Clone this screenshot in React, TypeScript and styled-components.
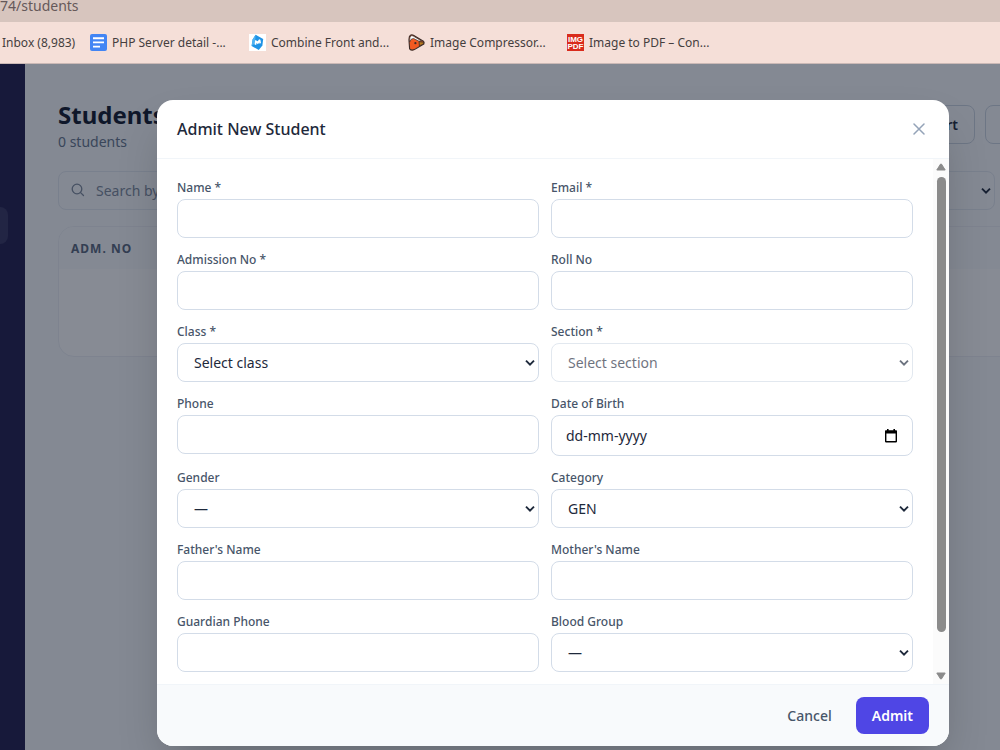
import React, { useId } from "react";
import styled, { createGlobalStyle } from "styled-components";

const GlobalStyle = createGlobalStyle`
  *, *::before, *::after { box-sizing: border-box; }
  body {
    margin: 0;
    overflow: hidden;
    font-family: "Noto Sans", "Open Sans", sans-serif;
    font-size: 14px;
    color: #1e293b;
  }
  button, input, select { font: inherit; color: inherit; margin: 0; }
  svg { display: block; flex: none; }
`;

const Page = styled.div`
  display: flex;
  flex-direction: column;
  height: 100vh;
  overflow: hidden;
`;

/* Browser chrome */

const AddressBar = styled.div`
  flex: none;
  height: 22px;
  overflow: hidden;
  background: #d7c5be;
  color: #66595a;
  font-size: 14px;
  line-height: 12px;
`;

const BookmarksBar = styled.nav`
  flex: none;
  display: flex;
  align-items: center;
  height: 42px;
  padding-left: 2px;
  background: #f5dfd8;
  border-bottom: 1px solid #cbb9b6;
`;

const Bookmark = styled.a<{ $first?: boolean }>`
  flex: none;
  display: flex;
  align-items: center;
  gap: 5px;
  width: ${(p) => (p.$first ? 88 : 159)}px;
  color: #453e3e;
  font-size: 12px;
  text-decoration: none;
  white-space: nowrap;
`;

/* Page behind the dialog */

const Workspace = styled.div`
  position: relative;
  flex: 1;
  display: flex;
  min-height: 0;
  background: #f8fafc;
  overflow: hidden;
`;

const Sidebar = styled.aside`
  flex: none;
  width: 25px;
  padding-top: 143px;
  background: #1e1b4b;
`;

const SidebarItem = styled.div`
  width: 8px;
  height: 37px;
  border-radius: 0 8px 8px 0;
  background: #35325e;
`;

const Main = styled.main`
  flex: none;
  width: calc(100% + 65px);
  padding: 36px 0 0 33px;
`;

const PageHead = styled.header`
  display: flex;
  justify-content: space-between;
  align-items: flex-start;
  height: 51px;
`;

const PageTitle = styled.h1`
  margin: 0;
  color: #0f172a;
  font-size: 24px;
  line-height: 30px;
  font-weight: 700;
`;

const PageCount = styled.p`
  margin: 0;
  color: #64748b;
  font-size: 14px;
  line-height: 24px;
`;

const Actions = styled.div`
  display: flex;
  gap: 10px;
  padding-top: 5px;
`;

const OutlineButton = styled.button<{ $width: number }>`
  width: ${(p) => p.$width}px;
  height: 39px;
  padding: 0 16px;
  text-align: right;
  font-weight: 600;
  background: #f8fafc;
  border: 1px solid #cbd5e1;
  border-radius: 8px;
`;

const Filters = styled.div`
  display: flex;
  gap: 10px;
  margin-top: 20px;
  height: 39px;
`;

const SearchBox = styled.label`
  flex: 1;
  display: flex;
  align-items: center;
  gap: 10px;
  padding-left: 12px;
  color: #7c899b;
  border: 1px solid #e2e8f0;
  border-radius: 8px;

  input {
    flex: 1;
    min-width: 0;
    border: 0;
    padding: 0;
    background: transparent;
    outline: none;
  }
  input::placeholder { color: #7c899b; opacity: 1; }
`;

const TableCard = styled.section`
  margin-top: 16px;
  height: 131px;
  overflow: hidden;
  background: #ffffff;
  border: 1px solid #eceff5;
  border-radius: 16px;

  table { width: 100%; border-collapse: collapse; }
  th {
    height: 42px;
    padding: 0 12px;
    text-align: left;
    font-size: 12px;
    font-weight: 700;
    letter-spacing: 1px;
    color: #56657b;
    background: #f8fafc;
  }
`;

/* Dialog */

const Overlay = styled.div`
  position: absolute;
  inset: 0;
  display: flex;
  align-items: flex-start;
  padding: 36px 51px 0 157px;
  background: rgba(15, 23, 42, 0.5);
`;

const Dialog = styled.section`
  flex: 1;
  min-width: 0;
  overflow: hidden;
  background: #ffffff;
  border-radius: 16px;
  box-shadow: 0 24px 48px -12px rgba(0, 0, 0, 0.25);
`;

const DialogHead = styled.header`
  display: flex;
  align-items: center;
  justify-content: space-between;
  height: 59px;
  padding: 0 22px 0 20px;
  border-bottom: 1px solid #f1f5f9;

  h2 { margin: 0; font-size: 16px; line-height: 24px; font-weight: 500; }
`;

const CloseButton = styled.button`
  display: grid;
  place-items: center;
  width: 16px;
  height: 16px;
  padding: 0;
  color: #94a3b8;
  background: none;
  border: 0;
`;

const DialogBody = styled.div`
  display: flex;
`;

const Form = styled.form`
  flex: 1;
  min-width: 0;
  display: grid;
  grid-template-columns: 1fr 1fr;
  gap: 13px 12px;
  padding: 20px 20px 12px;
`;

const FieldBox = styled.div`
  display: flex;
  flex-direction: column;
  gap: 3px;
  min-width: 0;

  label {
    color: #475569;
    font-size: 12px;
    line-height: 17px;
    font-weight: 500;
  }
`;

const Input = styled.input`
  width: 100%;
  height: 39px;
  padding: 0 14px;
  background: #ffffff;
  border: 1px solid #d3dce8;
  border-radius: 8px;
`;

const SelectWrap = styled.div<{ $muted?: boolean }>`
  display: grid;
  align-items: center;
  opacity: ${(p) => (p.$muted ? 0.65 : 1)};

  > * { grid-area: 1 / 1; }
  svg { justify-self: end; margin-right: 4px; pointer-events: none; }
`;

const Select = styled.select`
  appearance: none;
  width: 100%;
  height: 39px;
  padding: 0 30px 0 16px;
  background: #ffffff;
  border: 1px solid #d3dce8;
  border-radius: 8px;
  opacity: 1;
`;

const DateWrap = styled.div`
  display: flex;
  align-items: center;
  height: 41px;
  padding: 0 14px;
  border: 1px solid #d3dce8;
  border-radius: 8px;

  input {
    flex: 1;
    min-width: 0;
    padding: 0;
    border: 0;
    background: none;
    outline: none;
  }
  input::placeholder { color: #1e293b; opacity: 1; }
  button { padding: 0; border: 0; background: none; color: #000000; }
`;

const ScrollTrack = styled.div`
  flex: none;
  display: flex;
  flex-direction: column;
  align-items: center;
  gap: 6px;
  width: 16px;
  padding: 4px 0;
  background: #fbfbfb;
`;

const ScrollLane = styled.div`
  flex: 1;
  width: 9px;
`;

const ScrollThumb = styled.div`
  height: 93%;
  border-radius: 5px;
  background: #8b8b8b;
`;

const DialogFoot = styled.footer`
  display: flex;
  justify-content: flex-end;
  gap: 8px;
  padding: 12px 20px;
  background: #f8fafc;
  border-top: 1px solid #f1f5f9;
`;

const FootButton = styled.button<{ $primary?: boolean }>`
  height: 37px;
  padding: 0 16px;
  border: 0;
  border-radius: 8px;
  font-weight: ${(p) => (p.$primary ? 600 : 500)};
  color: ${(p) => (p.$primary ? "#ffffff" : "#475569")};
  background: ${(p) => (p.$primary ? "#4f46e5" : "transparent")};
`;

/* Icons */

const Chevron = () => (
  <svg width="10" height="8" viewBox="0 0 10 8" fill="none" stroke="#1e293b" strokeWidth="1.9">
    <path d="M1 1.6l4 4 4-4" />
  </svg>
);

const DocsIcon = () => (
  <svg width="17" height="17" viewBox="0 0 17 17">
    <rect width="17" height="17" rx="2" fill="#4285f4" />
    <path d="M3 4.2h11M3 8.4h11M3 12.6h7" stroke="#fff" strokeWidth="1.9" />
  </svg>
);

const CombineIcon = () => (
  <svg width="17" height="17" viewBox="0 0 17 17">
    <rect width="17" height="17" fill="#fff" />
    <path d="M6.6 0.8L14.2 5 13.4 11.6 9.8 16 2.6 12 3.6 5.6z" fill="#1f93e6" />
    <path d="M6.6 0.8L3.6 5.6 2.6 12 6 9.4z" fill="#4fb3f2" />
    <path d="M6.2 6l-.6 4.4 1.6.6.3-2 1.4 1.2 1.4-1.8.5 1.6 1.2-1.2-.6-3-1.3-.5-1.3 2z" fill="#fff" />
  </svg>
);

const CompressorIcon = () => (
  <svg width="17" height="17" viewBox="0 0 17 17" strokeLinejoin="round">
    <path d="M1 6.4Q.8 2.2 2.4 1.2 3.8.4 5.4 1.2L15.4 7.2Q16.4 8.4 15.8 10L6.4 15.6Q3.4 17 1.6 14.8z" fill="#f15a22" stroke="#3a2c28" strokeWidth="1.1" />
    <path d="M1.6 5.6Q1.8 2.6 3 1.8 4 1.4 5.2 2L13.6 7 11 7.2 5.4 4.4 3 5.4 1.6 8z" fill="#fff" stroke="#3a2c28" strokeWidth=".7" />
    <path d="M11 7.6l4.8.6-.6 2-3.8 1.6z" fill="#b8791d" stroke="#3a2c28" strokeWidth=".8" />
    <circle cx="7.4" cy="9.2" r="1.1" fill="#3a2c28" />
  </svg>
);

const ImgPdfIcon = () => (
  <svg width="17" height="17" viewBox="0 0 17 17">
    <rect width="17" height="17" fill="#d92b1c" />
    <g fill="#fff" fontFamily="Liberation Sans, sans-serif" fontWeight="700" fontSize="8" textAnchor="middle">
      <text x="8.5" y="7.6">IMG</text>
      <text x="8.5" y="15.4">PDF</text>
    </g>
  </svg>
);

const SearchIcon = () => (
  <svg width="15" height="15" viewBox="0 0 15 15" fill="none" stroke="currentColor" strokeWidth="1.3" strokeLinecap="round">
    <circle cx="6" cy="6" r="4.8" />
    <path d="M9.6 9.6l2.9 2.9" />
  </svg>
);

const CloseIcon = () => (
  <svg width="12" height="12" viewBox="0 0 12 12" fill="none" stroke="currentColor" strokeWidth="1.5" strokeLinecap="round">
    <path d="M1 1l10 10M11 1L1 11" />
  </svg>
);

const CalendarIcon = () => (
  <svg width="14" height="14" viewBox="0 0 14 14">
    <path d="M3 0h1.6v1.2h4.8V0H11v1.2h1.2q.8 0 .8.8v10.6q0 .8-.8.8H1.8q-.8 0-.8-.8V2q0-.8.8-.8H3zM2.4 4.6v7.4h9.2V4.6z" fill="currentColor" fillRule="evenodd" />
  </svg>
);

const Arrow = ({ down }: { down?: boolean }) => (
  <svg width="10" height="8" viewBox="0 0 10 8" fill="#8b8b8b" stroke="#8b8b8b" strokeLinejoin="round">
    <path d={down ? "M.8 1h8.4L5.4 7h-.8z" : "M.8 7h8.4L5.4 1h-.8z"} />
  </svg>
);

/* Fields */

type FieldProps = { label: string; kind?: "text" | "date" | "select"; value?: string; disabled?: boolean };

function Field({ label, kind = "text", value, disabled }: FieldProps) {
  const id = useId();
  return (
    <FieldBox>
      <label htmlFor={id}>{label}</label>
      {kind === "text" && <Input id={id} type="text" />}
      {kind === "select" && (
        <SelectWrap $muted={disabled}>
          <Select id={id} disabled={disabled}>
            <option>{value}</option>
          </Select>
          <Chevron />
        </SelectWrap>
      )}
      {kind === "date" && (
        <DateWrap>
          <input id={id} type="text" placeholder="dd-mm-yyyy" />
          <button type="button" aria-label="Open calendar">
            <CalendarIcon />
          </button>
        </DateWrap>
      )}
    </FieldBox>
  );
}

const fields: FieldProps[] = [
  { label: "Name *" },
  { label: "Email *" },
  { label: "Admission No *" },
  { label: "Roll No" },
  { label: "Class *", kind: "select", value: "Select class" },
  { label: "Section *", kind: "select", value: "Select section", disabled: true },
  { label: "Phone" },
  { label: "Date of Birth", kind: "date" },
  { label: "Gender", kind: "select", value: "—" },
  { label: "Category", kind: "select", value: "GEN" },
  { label: "Father's Name" },
  { label: "Mother's Name" },
  { label: "Guardian Phone" },
  { label: "Blood Group", kind: "select", value: "—" },
];

const FilterSelect = styled(SelectWrap)<{ $width: number }>`
  width: ${(p) => p.$width}px;

  select { background: transparent; border-color: #e2e8f0; }
`;

export default function App() {
  return (
    <Page>
      <GlobalStyle />
      <AddressBar>74/students</AddressBar>
      <BookmarksBar>
        <Bookmark href="#" $first>Inbox (8,983)</Bookmark>
        <Bookmark href="#"><DocsIcon />PHP Server detail -...</Bookmark>
        <Bookmark href="#"><CombineIcon />Combine Front and...</Bookmark>
        <Bookmark href="#"><CompressorIcon />Image Compressor...</Bookmark>
        <Bookmark href="#"><ImgPdfIcon />Image to PDF – Con...</Bookmark>
      </BookmarksBar>
      <Workspace>
        <Sidebar><SidebarItem /></Sidebar>
        <Main>
          <PageHead>
            <div>
              <PageTitle>Students</PageTitle>
              <PageCount>0 students</PageCount>
            </div>
            <Actions>
              <OutlineButton $width={90}>Import</OutlineButton>
              <OutlineButton $width={105} aria-label="Add" />
            </Actions>
          </PageHead>
          <Filters>
            <SearchBox>
              <SearchIcon />
              <input type="text" placeholder="Search by name" />
            </SearchBox>
            <FilterSelect $width={120}>
              <Select aria-label="Class filter"><option /></Select>
              <Chevron />
            </FilterSelect>
            <FilterSelect $width={85}>
              <Select aria-label="Section filter"><option /></Select>
              <Chevron />
            </FilterSelect>
          </Filters>
          <TableCard>
            <table>
              <thead><tr><th>ADM. NO</th></tr></thead>
            </table>
          </TableCard>
        </Main>
        <Overlay>
          <Dialog role="dialog" aria-labelledby="dialog-title">
            <DialogHead>
              <h2 id="dialog-title">Admit New Student</h2>
              <CloseButton aria-label="Close"><CloseIcon /></CloseButton>
            </DialogHead>
            <DialogBody>
              <Form id="admit-form">
                {fields.map((f) => <Field key={f.label} {...f} />)}
              </Form>
              <ScrollTrack aria-hidden="true">
                <Arrow />
                <ScrollLane><ScrollThumb /></ScrollLane>
                <Arrow down />
              </ScrollTrack>
            </DialogBody>
            <DialogFoot>
              <FootButton type="button">Cancel</FootButton>
              <FootButton type="submit" form="admit-form" $primary>Admit</FootButton>
            </DialogFoot>
          </Dialog>
        </Overlay>
      </Workspace>
    </Page>
  );
}
